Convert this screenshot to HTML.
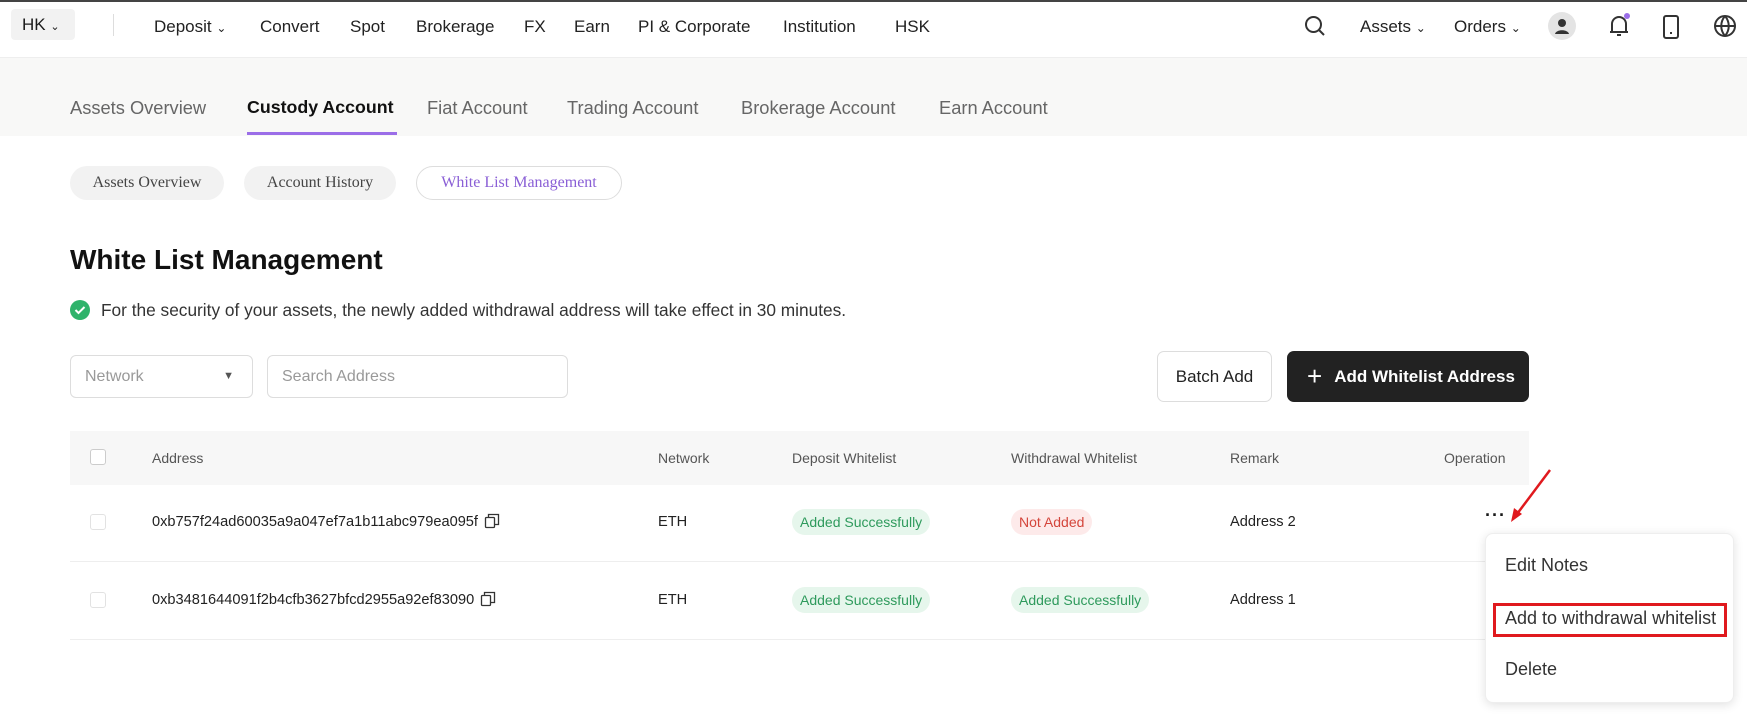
<!DOCTYPE html>
<html><head><meta charset="utf-8"><style>
*{margin:0;padding:0;box-sizing:border-box}
body{width:1747px;height:726px;overflow:hidden;background:#fff;font-family:"Liberation Sans","Noto Sans CJK SC",sans-serif;color:#1a1a1a;position:relative}
.a{position:absolute;white-space:nowrap}
.nav{position:absolute;left:0;top:0;width:1747px;height:58px;border-top:2px solid #444;background:#fff;border-bottom:1px solid #eee}
.ni{position:absolute;top:15px;font-size:17px;font-weight:500;color:#222}
.gray{position:absolute;left:0;top:58px;width:1747px;height:78px;background:#f8f8f7}
.tab{position:absolute;top:97px;font-size:18.3px;color:#666}
.pill{position:absolute;top:166px;height:34px;border-radius:17px;background:#f2f2f2;font-family:"Liberation Serif",serif;font-size:16px;color:#444;line-height:34px;text-align:center}
.th{position:absolute;top:450px;font-size:14px;color:#555}
.td{position:absolute;font-size:14.6px;color:#222;line-height:18px}
.cb{position:absolute;width:16px;height:16px;border:1px solid #ccc;border-radius:3px;background:#fff}
.bd{position:absolute;height:26px;line-height:26px;padding:0 8px;border-radius:13px;font-size:14px}
.g{background:#e6f6ec;color:#2e9a5c}.r{background:#fdeaea;color:#d4453b}
.cp{display:inline-block;vertical-align:-3px;margin-left:6px}
</style></head><body>
<div class="nav">
 <div class="a" style="left:11px;top:7px;width:64px;height:31px;background:#f2f2f2;border-radius:4px;font-size:17px;line-height:31px;padding-left:11px">HK <span style="font-size:11px">&#8964;</span></div>
 <div class="a" style="left:113px;top:12px;width:1px;height:22px;background:#ddd"></div>
 <div class="ni" style="left:154px">Deposit <span style="font-size:12px">&#8964;</span></div>
 <div class="ni" style="left:260px">Convert</div>
 <div class="ni" style="left:350px">Spot</div>
 <div class="ni" style="left:416px">Brokerage</div>
 <div class="ni" style="left:524px">FX</div>
 <div class="ni" style="left:574px">Earn</div>
 <div class="ni" style="left:638px">PI &amp; Corporate</div>
 <div class="ni" style="left:783px">Institution</div>
 <div class="ni" style="left:895px">HSK</div>
 <svg class="a" style="left:1303px;top:12px" width="24" height="24" viewBox="0 0 24 24" fill="none" stroke="#333" stroke-width="2"><circle cx="10.5" cy="10.5" r="7.5"/><path d="M16 16l5 5"/></svg>
 <div class="ni" style="left:1360px">Assets <span style="font-size:12px">&#8964;</span></div>
 <div class="ni" style="left:1454px">Orders <span style="font-size:12px">&#8964;</span></div>
 <div class="a" style="left:1548px;top:10px;width:28px;height:28px;border-radius:50%;background:#e4e4e4"><svg width="28" height="28" viewBox="0 0 28 28"><circle cx="14" cy="11" r="4" fill="#333"/><path d="M7 22c1-5 13-5 14 0z" fill="#333"/></svg></div>
 <svg class="a" style="left:1606px;top:10px" width="26" height="28" viewBox="0 0 26 28" fill="none" stroke="#333" stroke-width="2"><path d="M6 20V12a7 7 0 0114 0v8H4h18M11 23h4"/><circle cx="21" cy="4" r="3" fill="#9b6ee8" stroke="none"/></svg>
 <svg class="a" style="left:1661px;top:12px" width="20" height="26" viewBox="0 0 20 26" fill="none" stroke="#333" stroke-width="2"><rect x="3" y="2" width="14" height="22" rx="2"/><path d="M9 19h2"/></svg>
 <svg class="a" style="left:1713px;top:12px" width="24" height="24" viewBox="0 0 24 24" fill="none" stroke="#333" stroke-width="2"><circle cx="12" cy="12" r="10"/><path d="M2 12h20M12 2c-5 6-5 14 0 20M12 2c5 6 5 14 0 20"/></svg>
</div>
<div class="gray"></div>
<div class="tab" style="left:70px">Assets Overview</div>
<div class="tab" style="left:247px;color:#111;font-weight:600;font-size:17.8px">Custody Account</div>
<div class="a" style="left:247px;top:132px;width:150px;height:3px;background:#9b6ee8"></div>
<div class="tab" style="left:427px">Fiat Account</div>
<div class="tab" style="left:567px">Trading Account</div>
<div class="tab" style="left:741px">Brokerage Account</div>
<div class="tab" style="left:939px">Earn Account</div>
<div class="pill" style="left:70px;width:154px">Assets Overview</div>
<div class="pill" style="left:244px;width:152px">Account History</div>
<div class="pill" style="left:416px;width:206px;background:#fff;border:1px solid #ddd;color:#8a5fd6;line-height:32px">White List Management</div>
<div class="a" style="left:70px;top:244px;font-size:28px;font-weight:700;color:#111">White List Management</div>
<svg class="a" style="left:70px;top:300px" width="20" height="20" viewBox="0 0 20 20"><circle cx="10" cy="10" r="10" fill="#2fb36b"/><path d="M5.5 10l3 3 6-6" stroke="#fff" stroke-width="2" fill="none"/></svg>
<div class="a" style="left:101px;top:300px;font-size:17.3px;color:#333">For the security of your assets, the newly added withdrawal address will take effect in 30 minutes.</div>
<div class="a" style="left:70px;top:355px;width:183px;height:43px;border:1px solid #ddd;border-radius:6px;font-size:16px;color:#999;line-height:41px;padding-left:14px">Network<span style="position:absolute;right:18px;top:0;font-size:11px;color:#555">&#9660;</span></div>
<div class="a" style="left:267px;top:355px;width:301px;height:43px;border:1px solid #ddd;border-radius:6px;font-size:16px;color:#999;line-height:41px;padding-left:14px">Search Address</div>
<div class="a" style="left:1157px;top:351px;width:115px;height:51px;border:1px solid #ddd;border-radius:7px;font-size:17px;font-weight:500;line-height:49px;text-align:center;color:#222">Batch Add</div>
<div class="a" style="left:1287px;top:351px;width:242px;height:51px;background:#222;border-radius:7px;font-size:17px;font-weight:600;line-height:51px;color:#fff;padding-left:20px"><span style="font-size:26px;font-weight:300;vertical-align:-3px;margin-right:12px">+</span>Add Whitelist Address</div>
<div class="a" style="left:70px;top:431px;width:1459px;height:54px;background:#f7f7f7"></div>
<div class="cb" style="left:90px;top:449px"></div>
<div class="th" style="left:152px">Address</div>
<div class="th" style="left:658px">Network</div>
<div class="th" style="left:792px">Deposit Whitelist</div>
<div class="th" style="left:1011px">Withdrawal Whitelist</div>
<div class="th" style="left:1230px">Remark</div>
<div class="th" style="left:1444px">Operation</div>
<div class="a" style="left:70px;top:561px;width:1415px;height:1px;background:#eee"></div>
<div class="a" style="left:70px;top:639px;width:1415px;height:1px;background:#eee"></div>
<div class="cb" style="left:90px;top:514px;border-color:#e2e2e2"></div>
<div class="td" style="left:152px;top:513px">0xb757f24ad60035a9a047ef7a1b11abc979ea095f<svg class="cp" width="16" height="16" viewBox="0 0 16 16" fill="none" stroke="#333" stroke-width="1.3"><rect x="1.5" y="4.5" width="9" height="10" rx="1"/><path d="M4.5 4.5V1.5h10v10h-4"/></svg></div>
<div class="td" style="left:658px;top:513px">ETH</div>
<div class="bd g" style="left:792px;top:509px">Added Successfully</div>
<div class="bd r" style="left:1011px;top:509px">Not Added</div>
<div class="td" style="left:1230px;top:513px">Address 2</div>
<div class="a" style="left:1485px;top:505px;font-size:18px;font-weight:700;letter-spacing:1px">&middot;&middot;&middot;</div>
<div class="cb" style="left:90px;top:592px;border-color:#e2e2e2"></div>
<div class="td" style="left:152px;top:591px">0xb3481644091f2b4cfb3627bfcd2955a92ef83090<svg class="cp" width="16" height="16" viewBox="0 0 16 16" fill="none" stroke="#333" stroke-width="1.3"><rect x="1.5" y="4.5" width="9" height="10" rx="1"/><path d="M4.5 4.5V1.5h10v10h-4"/></svg></div>
<div class="td" style="left:658px;top:591px">ETH</div>
<div class="bd g" style="left:792px;top:587px">Added Successfully</div>
<div class="bd g" style="left:1011px;top:587px">Added Successfully</div>
<div class="td" style="left:1230px;top:591px">Address 1</div>
<svg class="a" style="left:1505px;top:468px" width="50" height="56" viewBox="0 0 50 56"><path d="M45 2L12 46" stroke="#e0191e" stroke-width="2.5"/><path d="M6 54l3-14 8 6z" fill="#e0191e"/></svg>
<div class="a" style="left:1485px;top:533px;width:249px;height:170px;background:#fff;border:1px solid #eee;border-radius:8px;box-shadow:0 2px 10px rgba(0,0,0,.12)"></div>
<div class="a" style="left:1505px;top:555px;font-size:18px;color:#333">Edit Notes</div>
<div class="a" style="left:1493px;top:603px;width:234px;height:34px;border:3px solid #e0191e"></div>
<div class="a" style="left:1505px;top:608px;font-size:18px;color:#333">Add to withdrawal whitelist</div>
<div class="a" style="left:1505px;top:659px;font-size:18px;color:#333">Delete</div>
</body></html>
